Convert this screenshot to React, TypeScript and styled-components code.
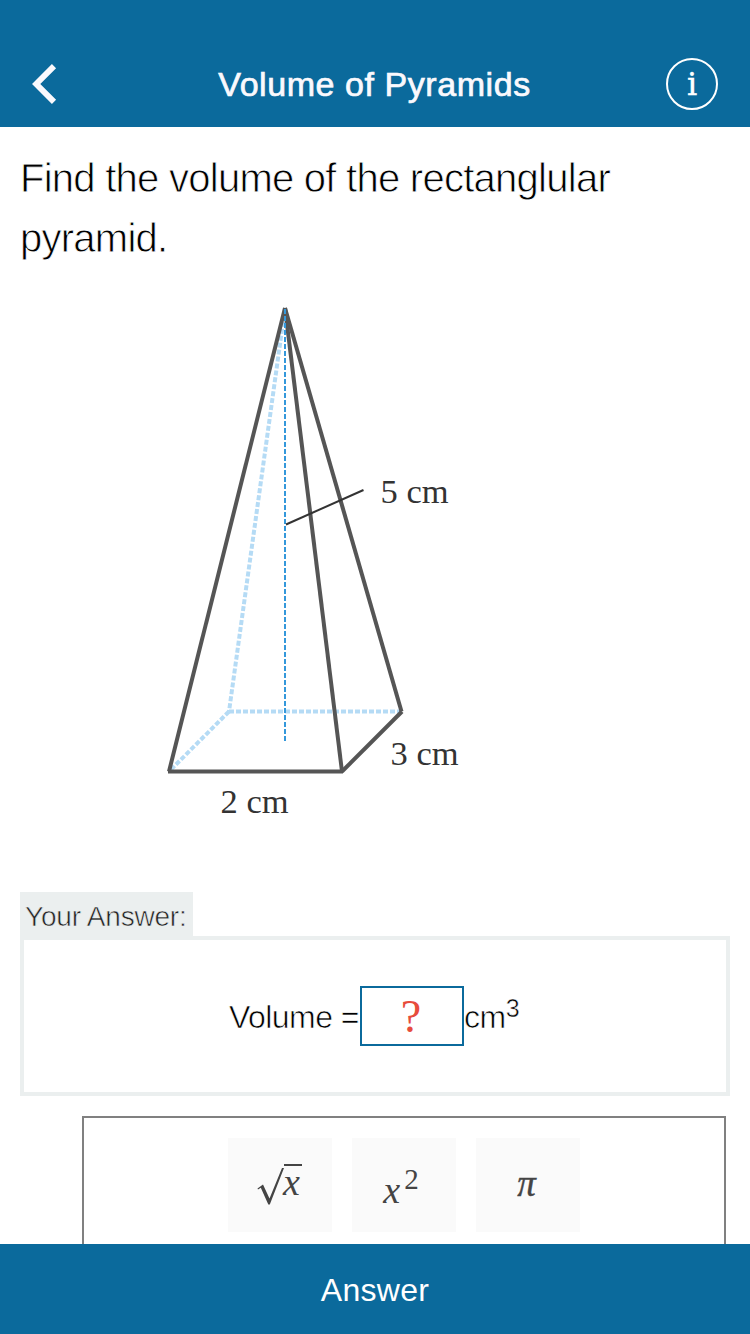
import React from "react";
import styled, { createGlobalStyle } from "styled-components";

const BLUE = "#0b6a9c";
const PALE = "#ebefef";
const SANS = `"Liberation Sans", Arial, sans-serif`;
const SERIF = `"Liberation Serif", "Times New Roman", serif`;

const GlobalStyle = createGlobalStyle`
  body { margin: 0; background: #fff; }
  * { box-sizing: border-box; }
`;

const Screen = styled.div`
  display: flex;
  flex-direction: column;
  width: 750px;
  height: 1334px;
  overflow: hidden;
  background: #fff;
  font-family: ${SANS};
  color: #000;
`;

const Header = styled.header`
  display: flex;
  flex: none;
  align-items: center;
  justify-content: space-between;
  height: 127px;
  padding: 41px 32px 0 30px;
  background: ${BLUE};
  color: #fff;
`;

const BackButton = styled.button`
  display: flex;
  width: 53px;
  padding: 0;
  border: 0;
  background: none;
  color: #faf9fd;
`;

const Title = styled.h1`
  margin: 0;
  font-size: 34px;
  font-weight: 400;
  letter-spacing: 0.56px;
  line-height: 40px;
  color: #faf9fd;
  -webkit-text-stroke: 0.7px #faf9fd;
`;

const InfoButton = styled.button`
  display: flex;
  align-items: center;
  justify-content: center;
  width: 52px;
  height: 52px;
  padding: 0;
  border: 2px solid #fff;
  border-radius: 50%;
  background: none;
  color: #fff;
  font: 32px/48px "DejaVu Serif", serif;
  -webkit-text-stroke: 0.4px #fff;
`;

const Content = styled.main`
  display: flex;
  flex: 1;
  flex-direction: column;
  min-height: 0;
  padding: 21px 20px 0;
  overflow: hidden;
`;

/* Light-weight text: the outline in the backdrop colour slims the strokes. */
const LightText = styled.span<{ $size: number; $track: number; $slim: number; $backdrop?: string }>`
  display: block;
  font-size: ${(p) => p.$size}px;
  letter-spacing: ${(p) => p.$track}px;
  white-space: pre;
  -webkit-text-stroke: ${(p) => p.$slim}px ${(p) => p.$backdrop ?? "#fff"};
`;

const Question = styled.p`
  flex: none;
  height: 120px;
  margin: 0;
  line-height: 60px;
`;

const Figure = styled.figure`
  flex: none;
  height: 624px;
  margin: 0;
  padding: 22px 0 0 130px;

  svg { display: block; }
  text { font: 34.5px ${SERIF}; fill: #333; }
`;

const AnswerTab = styled.div`
  flex: none;
  align-self: flex-start;
  width: 173px;
  height: 44px;
  padding-left: 5px;
  background: ${PALE};
  color: #222;
  line-height: 49px;
`;

const AnswerPanel = styled.section`
  display: flex;
  flex: none;
  align-items: center;
  height: 160px;
  padding-left: 205px;
  border: 4px solid ${PALE};
  line-height: 62px;
`;

const AnswerLabel = styled.span`
  width: 131px;
  height: 60px;
`;

const AnswerField = styled.div`
  width: 104px;
  height: 60px;
  padding-right: 2px;
  border: 2px solid ${BLUE};
  color: #e74c3c;
  font: 46px/58px ${SERIF};
  text-align: center;
`;

const Unit = styled.span`
  display: flex;
  height: 60px;
`;

const Exponent = styled.span`
  margin-top: -9px;
`;

const Keypad = styled.section`
  display: flex;
  flex: none;
  gap: 20px;
  height: 200px;
  margin: 20px 4px 0 62px;
  padding: 20px 0 0 144px;
  border: 2px solid #808080;
`;

const Key = styled.button`
  display: flex;
  align-items: flex-start;
  justify-content: center;
  width: 104px;
  height: 94px;
  padding: 0;
  border: 0;
  background: #fafafa;
  color: #444;
  font: italic 38px/40px ${SERIF};
`;

const Base = styled.span`
  margin: 32px 0 0 -6px;
`;

const Power = styled.span`
  margin: 21px 0 0 4px;
  font-size: 29px;
  font-style: normal;
`;

const Pi = styled.span`
  margin: 26px 3px 0 0;
  font-size: 37px;
  -webkit-text-stroke: 0.4px #444;
`;

const AnswerBar = styled.button`
  flex: none;
  height: 90px;
  padding: 2px 0 0;
  border: 0;
  background: ${BLUE};
  color: #fff;
  font: 32px/40px ${SANS};
  letter-spacing: 0.3px;
`;

const Pyramid = () => (
  <svg width="330" height="540" viewBox="150 290 330 540">
    <g fill="none" stroke="#b5dbf5" strokeWidth="4" strokeDasharray="5 2">
      <path d="M285 308L229 711.5" />
      <path d="M229 711.5H401" />
      <path d="M229 711.5L169 771.5" />
    </g>
    <g fill="none" stroke="#555" strokeWidth="4">
      <path d="M285 308L169 771.5" />
      <path d="M285 308L342 771.5" />
      <path d="M285 308L401.5 711.5" />
      <path d="M168 771.5H343" />
      <path d="M342 771.5L402 711.5" />
    </g>
    <path d="M285 309V742" stroke="#3498db" strokeWidth="2" strokeDasharray="5 2" />
    <path d="M286 524.5L363.5 490" stroke="#333" strokeWidth="2" />
    <text x="380.5" y="502.5">5 cm</text>
    <text x="390.5" y="764.5">3 cm</text>
    <text x="220.5" y="812.5">2 cm</text>
  </svg>
);

const Root = () => (
  <svg width="46" height="94" viewBox="257 1138 46 94">
    <path d="M257.5 1188.5L263 1184.5L269.5 1198.5L282 1168H284L269.8 1204.5H268.3L260.8 1187.8L258 1189.5Z" fill="#444" />
    <path d="M284 1165H302" stroke="#444" strokeWidth="2" />
    <text x="283" y="1195" fontSize="38" fill="#444">x</text>
  </svg>
);

export default function App() {
  return (
    <Screen>
      <GlobalStyle />
      <Header>
        <BackButton aria-label="Back">
          <svg width="30" height="44" viewBox="30 62 30 44">
            <path d="M54 66.2L36.2 84L54 101.8" fill="none" stroke="currentColor" strokeWidth="5.9" />
          </svg>
        </BackButton>
        <Title>Volume of Pyramids</Title>
        <InfoButton>i</InfoButton>
      </Header>
      <Content>
        <Question>
          <LightText $size={40} $track={-0.74} $slim={0.8}>
            {"Find the volume of the rectanglular\npyramid."}
          </LightText>
        </Question>
        <Figure>
          <Pyramid />
        </Figure>
        <AnswerTab>
          <LightText $size={28} $track={-0.2} $slim={0.6} $backdrop={PALE}>Your Answer:</LightText>
        </AnswerTab>
        <AnswerPanel>
          <AnswerLabel>
            <LightText $size={32} $track={-0.55} $slim={0.65}>Volume =</LightText>
          </AnswerLabel>
          <AnswerField>?</AnswerField>
          <Unit>
            <LightText $size={32} $track={-0.4} $slim={0.65}>cm</LightText>
            <Exponent>
              <LightText $size={25} $track={0} $slim={0.45}>3</LightText>
            </Exponent>
          </Unit>
        </AnswerPanel>
        <Keypad>
          <Key><Root /></Key>
          <Key><Base>x</Base><Power>2</Power></Key>
          <Key><Pi>π</Pi></Key>
        </Keypad>
      </Content>
      <AnswerBar>Answer</AnswerBar>
    </Screen>
  );
}
